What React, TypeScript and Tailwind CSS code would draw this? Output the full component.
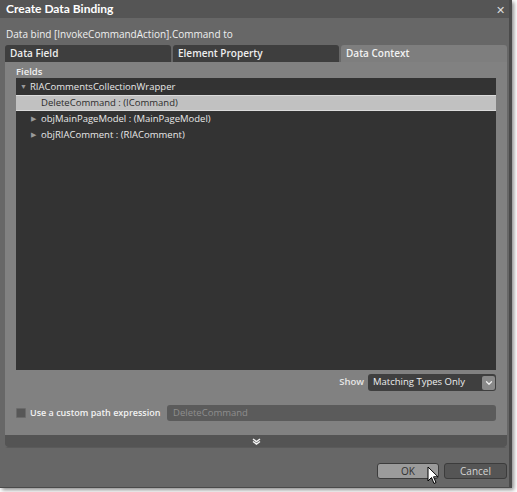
import { ChevronDown } from "lucide-react";

const font = { fontFamily: '"Open Sans", "Noto Sans", sans-serif' };

function Tab({ label, active }: { label: string; active?: boolean }) {
  return (
    <div
      className={
        "flex-1 h-[17px] rounded-t-[3px] px-[5px] flex items-center text-[10px] font-semibold " +
        (active ? "bg-[#7e7e7e] text-[#f2f2f2]" : "bg-[#3e3e3e] text-[#eeeeee]")
      }
    >
      {label}
    </div>
  );
}

function TreeRow({
  label,
  arrow,
  indent,
  selected,
}: {
  label: string;
  arrow?: "open" | "closed";
  indent: number;
  selected?: boolean;
}) {
  return (
    <div
      className={
        "h-[16px] flex items-center text-[9.5px] " +
        (selected
          ? "bg-[#c1c1c1] text-[#2c2c2c] border-y border-[#dcdcdc]"
          : "text-[#e8e8e8]")
      }
      style={{ paddingLeft: indent }}
    >
      <span className="w-[10px] text-[7px] text-[#9a9a9a]">
        {arrow === "open" ? "▼" : arrow === "closed" ? "▶" : ""}
      </span>
      {label}
    </div>
  );
}

export default function App() {
  return (
    <div className="w-[517px] h-[492px] bg-white relative" style={font}>
      <div className="w-[512px] h-[488px] bg-[#676767] border-r-[3px] border-b border-[#4a4a4a] shadow-[2px_2px_4px_rgba(0,0,0,0.45)] flex flex-col">
        {/* title bar */}
        <div className="h-[18px] bg-[#555555] flex items-center justify-between pl-[6px] pr-[4px]">
          <span className="text-[12px] font-bold text-white" style={{ fontFamily: "Lato, sans-serif" }}>
            Create Data Binding
          </span>
          <span className="text-[11px] text-[#dddddd] leading-none">✕</span>
        </div>

        <div className="pl-[5px] pr-[2px] pt-[9px]">
          <div className="text-[10px] text-[#f0f0f0] h-[14px] leading-[14px] pl-[1px]">
            Data bind [InvokeCommandAction].Command to
          </div>

          {/* tabs */}
          <div className="flex gap-[2px] mt-[4px]">
            <Tab label="Data Field" />
            <Tab label="Element Property" />
            <Tab label="Data Context" active />
          </div>

          {/* tab panel */}
          <div className="bg-[#818181] rounded-b-[3px] border-b border-[#5a5a5a]">
            <div className="px-[11px] pt-[3px]">
              <div className="text-[9.5px] font-semibold text-[#f0f0f0] h-[13px] leading-[13px]">Fields</div>
              <div className="bg-[#333333] h-[292px] pt-[1px]">
                <TreeRow label="RIACommentsCollectionWrapper" arrow="open" indent={4} />
                <TreeRow label="DeleteCommand : (ICommand)" indent={15} selected />
                <TreeRow label="objMainPageModel : (MainPageModel)" arrow="closed" indent={15} />
                <TreeRow label="objRIAComment : (RIAComment)" arrow="closed" indent={15} />
              </div>

              <div className="flex justify-end items-center gap-[4px] mt-[4px] h-[17px]">
                <span className="text-[9.5px] font-semibold text-[#e6e6e6]">Show</span>
                <div className="w-[128px] h-[17px] bg-[#3f3f3f] rounded-[3px] flex items-center justify-between pl-[5px] pr-[1px]">
                  <span className="text-[9.5px] text-[#eeeeee]">Matching Types Only</span>
                  <div className="w-[13px] h-[14px] bg-[#8a8a8a] rounded-[2px] flex items-center justify-center">
                    <ChevronDown size={10} strokeWidth={3} color="#f0f0f0" />
                  </div>
                </div>
              </div>

              <div className="flex items-center mt-[14px] h-[16px]">
                <div className="w-[10px] h-[10px] bg-[#575757] border border-[#6a6a6a] rounded-[1px] mr-[4px]" />
                <span className="text-[9px] font-semibold text-[#f2f2f2] w-[137px] whitespace-nowrap">
                  Use a custom path expression
                </span>
                <div className="flex-1 h-[16px] bg-[#5b5b5b] rounded-[3px] flex items-center pl-[6px]">
                  <span className="text-[9.5px] text-[#8e8e8e]">DeleteCommand</span>
                </div>
              </div>
            </div>

            {/* expander */}
            <div className="mt-[14px] h-[12px] bg-[#545454] rounded-b-[3px] flex items-center justify-center">
              <svg width="9" height="7" viewBox="0 0 9 7">
                <path d="M1 1 L4.5 3.5 L8 1 M1 3.5 L4.5 6 L8 3.5" stroke="#f5f5f5" strokeWidth="1.5" fill="none" />
              </svg>
            </div>
          </div>

          {/* buttons */}
          <div className="flex justify-end gap-[5px] mt-[15px]">
            <div className="w-[62px] h-[16px] bg-[#9b9b9b] border border-[#3c3c3c] rounded-[3px] flex items-center justify-center text-[10px] text-[#303030]">
              OK
            </div>
            <div className="w-[63px] h-[16px] bg-[#555555] border border-[#3c3c3c] rounded-[3px] flex items-center justify-center text-[10px] text-[#d4d4d4]">
              Cancel
            </div>
          </div>
        </div>
      </div>

      {/* mouse cursor */}
      <svg className="absolute left-[427px] top-[466px]" width="13" height="19" viewBox="0 0 13 19">
        <path d="M1 1 L1 15 L4.5 11.5 L7 17.5 L9 16.5 L6.5 10.8 L11 10.8 Z" fill="white" stroke="black" strokeWidth="1" />
      </svg>
    </div>
  );
}
